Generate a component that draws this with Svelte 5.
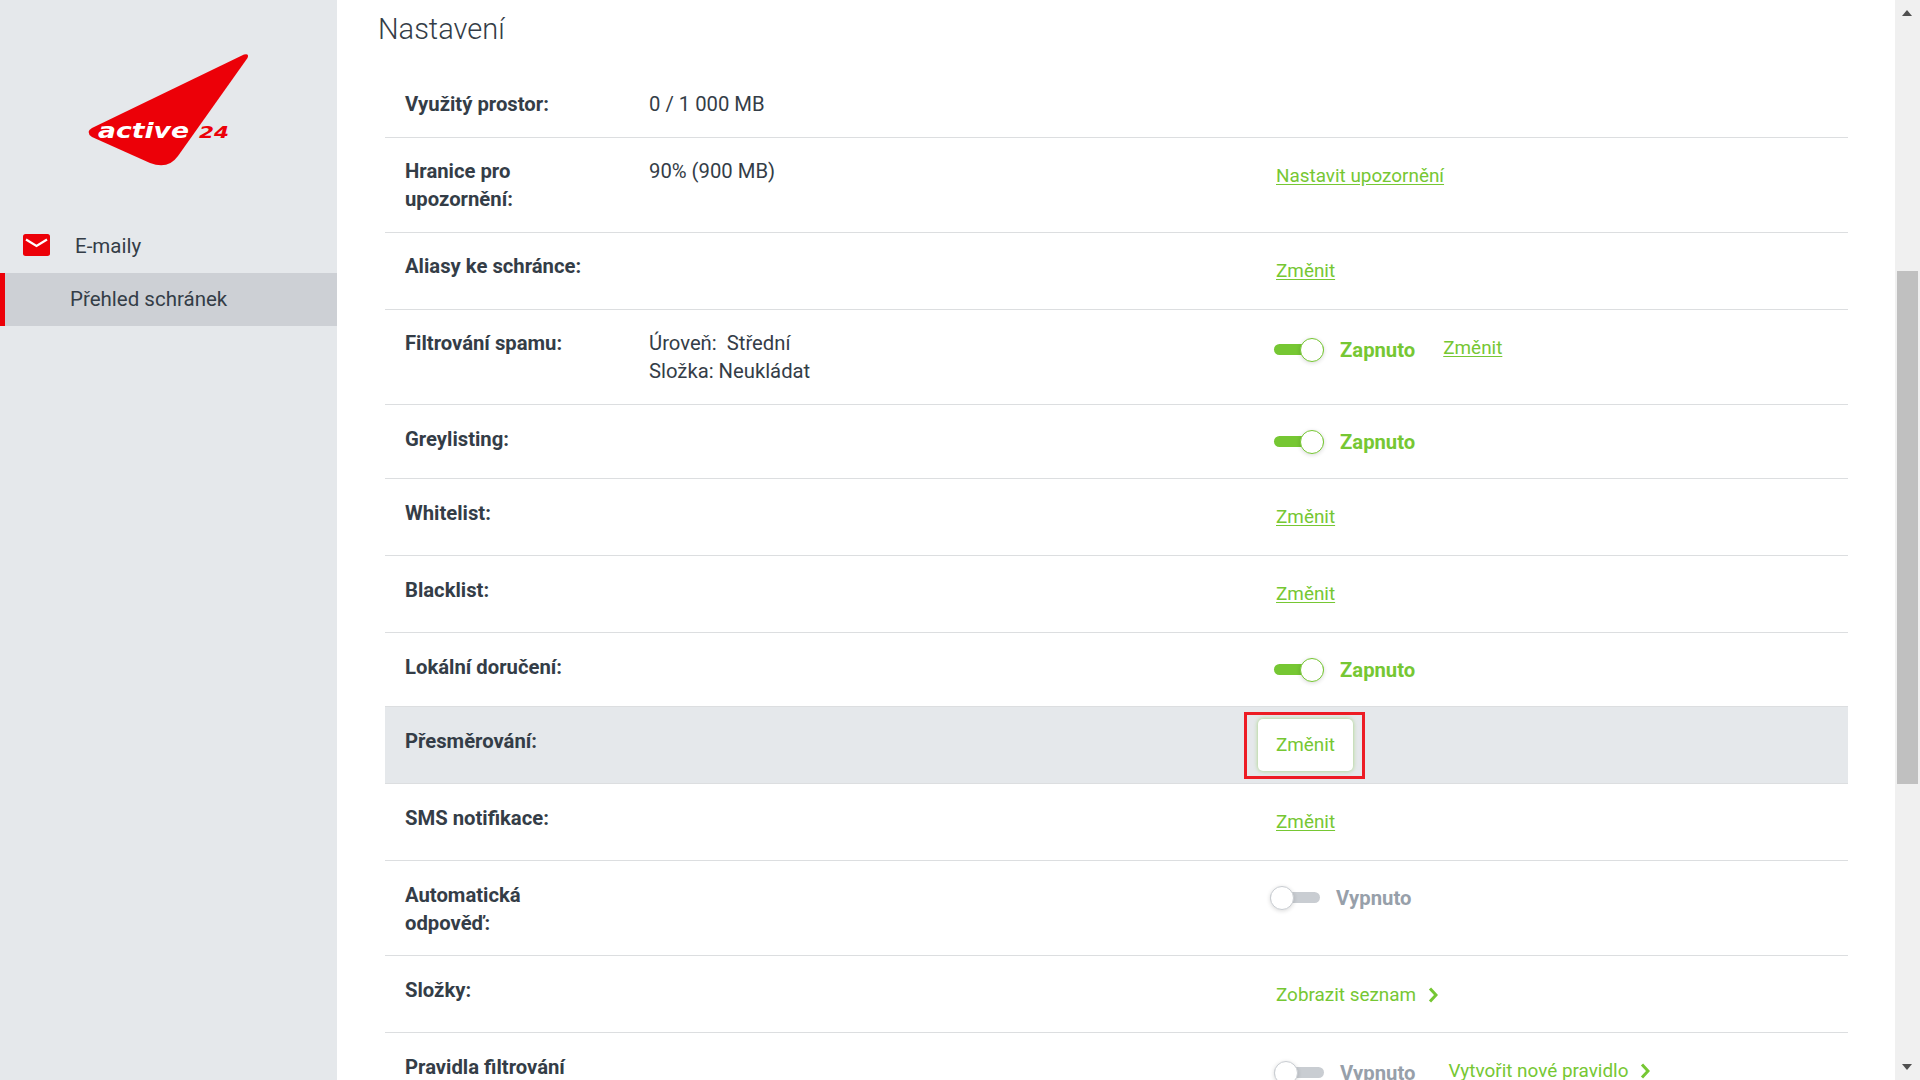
<script>
  const rows = [
    { label: "Využitý prostor:", value: ["0 / 1 000 MB"] },
    { label: "Hranice pro upozornění:", value: ["90% (900 MB)"], link: "Nastavit upozornění" },
    { label: "Aliasy ke schránce:", link: "Změnit" },
    { label: "Filtrování spamu:", value: ["Úroveň:\u00a0 Střední", "Složka: Neukládat"], toggle: true, low: true, link: "Změnit", raised: true },
    { label: "Greylisting:", toggle: true },
    { label: "Whitelist:", link: "Změnit" },
    { label: "Blacklist:", link: "Změnit" },
    { label: "Lokální doručení:", toggle: true },
    { label: "Přesměrování:", button: "Změnit" },
    { label: "SMS notifikace:", link: "Změnit" },
    { label: "Automatická odpověď:", toggle: false, shifted: true },
    { label: "Složky:", go: "Zobrazit seznam" },
    { label: "Pravidla filtrování", toggle: false, low: true, go: "Vytvořit nové pravidlo", raised: true },
  ];
</script>

<div class="page">
  <aside class="sidebar">
    <svg class="logo" viewBox="0 0 337 222" width="337" height="222" role="img" aria-label="active 24">
      <path d="M244 54.5 Q249.500 53 247.500 58 L178 156 Q168 170 150 163 L92 137 Q85 132 92 128 Z" fill="#ec0008" />
      <text class="logo-word" x="98" y="137.500" textLength="91" lengthAdjust="spacingAndGlyphs">active</text>
      <text class="logo-num" x="199" y="138" textLength="30" lengthAdjust="spacingAndGlyphs">24</text>
    </svg>
    <div class="nav-head">
      <svg viewBox="0 0 27 22" width="27" height="22">
        <rect width="27" height="22" rx="2.500" fill="#ec0008" />
        <path d="M3 5.500 L13.500 12 L24 5.500" fill="none" stroke="#fff" stroke-width="2.200" />
      </svg>
      <span>E-maily</span>
    </div>
    <div class="nav-item">Přehled schránek</div>
  </aside>

  <main class="content">
    <h1>Nastavení</h1>
    <div class="list">
      {#each rows as row}
        <div class="row" class:highlight={row.button}>
          <div class="label">{row.label}</div>
          <div class="value">
            {#each row.value ?? [] as line}
              <div>{line}</div>
            {/each}
          </div>
          <div
            class="action"
            class:tall={row.link || row.go || row.button}
            class:low={row.low}
            class:has-toggle={row.toggle !== undefined}
            class:shifted={row.shifted}
          >
            {#if row.toggle !== undefined}
              <span class="toggle" class:on={row.toggle}>
                <span class="track"></span>
                <span class="knob"></span>
              </span>
              <strong class:on={row.toggle}>{row.toggle ? "Zapnuto" : "Vypnuto"}</strong>
            {/if}
            {#if row.link}
              <a href="#top" class:raised={row.raised}>{row.link}</a>
            {/if}
            {#if row.go}
              <a href="#top" class="go" class:raised={row.raised} class:far={row.toggle === false}>
                {row.go}
                <svg viewBox="0 0 10 16" width="10" height="16">
                  <path d="M2 1.500 L8 8 L2 14.500" fill="none" stroke="#76c733" stroke-width="3" />
                </svg>
              </a>
            {/if}
            {#if row.button}
              <button type="button">{row.button}</button>
            {/if}
          </div>
        </div>
      {/each}
    </div>
  </main>

  <div class="scrollbar">
    <span class="arrow up"></span>
    <span class="thumb"></span>
    <span class="arrow down"></span>
  </div>
</div>

<style>
  :global(body) {
    margin: 0;
    background: #fff;
  }

  .page {
    display: flex;
    height: 1080px;
    overflow: hidden;
    font-family: Roboto, "Liberation Sans", sans-serif;
    font-size: 20.25px;
    line-height: 28px;
    color: #343d47;
  }

  .sidebar {
    flex: 0 0 337px;
    font-size: 20.5px;
    background: #e5e8eb;
  }

  .logo {
    display: block;
  }

  .logo-word {
    font-family: "DejaVu Sans", sans-serif;
    font-weight: 700;
    font-style: italic;
    font-size: 22px;
    fill: #fff;
  }

  .logo-num {
    font-family: "DejaVu Sans", sans-serif;
    font-weight: 700;
    font-style: italic;
    font-size: 16px;
    fill: #ec0008;
  }

  .nav-head {
    display: flex;
    align-items: center;
    gap: 25px;
    height: 48px;
    margin-bottom: 3px;
    padding-left: 23px;
  }

  .nav-head svg {
    margin-top: -2px;
  }

  .nav-item {
    height: 53px;
    line-height: 53px;
    padding-left: 65px;
    border-left: 5px solid #ec0008;
    background: #cdd0d5;
  }

  .content {
    flex: 1;
    min-width: 0;
    padding: 0 47px 0 41px;
  }

  h1 {
    margin: 0;
    height: 71px;
    padding-top: 11px;
    box-sizing: border-box;
    font-size: 29px;
    line-height: 36px;
    font-weight: 300;
    color: #343d47;
  }

  .list {
    margin-left: 7px;
  }

  .row {
    display: grid;
    grid-template-columns: 264px 627px 1fr;
    padding: 19px 0 19px;
    border-bottom: 1px solid #dcdee0;
  }

  .row.highlight {
    background: #e5e8eb;
  }

  .label {
    padding: 0 60px 0 20px;
    font-weight: 700;
  }

  .row:nth-child(n + 5) .label {
    padding-top: 1px;
    margin-bottom: -1px;
  }

  .action {
    display: flex;
    align-items: flex-start;
  }

  .action.tall {
    padding: 5px 0 5px;
  }

  .action.has-toggle {
    align-self: start;
    padding: 6px 0 5px;
    margin-left: -2px;
    align-items: center;
  }

  .action.low {
    padding-top: 9px;
  }

  .action.shifted {
    margin-left: -6px;
  }

  .toggle {
    position: relative;
    flex: 0 0 50px;
    height: 24px;
  }

  .track {
    position: absolute;
    left: 0;
    top: 6px;
    width: 50px;
    height: 11px;
    border-radius: 6px;
    background: #c9cdd2;
  }

  .knob {
    position: absolute;
    left: 0;
    top: 0;
    width: 24px;
    height: 24px;
    box-sizing: border-box;
    border-radius: 50%;
    background: #fff;
    border: 1px solid #c9cdd2;
    box-shadow: 0 1px 4px rgba(0, 0, 0, 0.15);
  }

  .toggle.on .track {
    background: #76c733;
  }

  .toggle.on .knob {
    left: 26px;
    border-color: #76c733;
  }

  strong {
    margin-left: 16px;
    font-weight: 700;
    line-height: 24px;
    color: #97a0aa;
  }

  strong.on {
    color: #76c733;
  }

  a {
    color: #76c733;
    font-size: 18.9px;
    text-decoration: underline;
    text-underline-offset: 2px;
  }

  a.raised {
    margin-left: 28px;
    margin-top: -5px;
  }

  a.far {
    margin-left: 33px;
  }

  a.go {
    display: inline-flex;
    align-items: center;
    gap: 12px;
    text-decoration: none;
  }

  a.go:not(.raised) {
    margin-top: 1px;
    margin-bottom: -1px;
  }

  button {
    position: relative;
    width: 95px;
    height: 52px;
    margin: -12px 0 -12px -18px;
    border: 0;
    border-radius: 5px;
    background: #fff;
    color: #76c733;
    font: inherit;
    font-size: 18.9px;
    box-shadow: 0 0 4px rgba(118, 199, 51, 0.6);
  }

  button::after {
    content: "";
    position: absolute;
    top: -7px;
    right: -12px;
    bottom: -8px;
    left: -14px;
    border: 3px solid #ed1c24;
  }

  .scrollbar {
    position: relative;
    flex: 0 0 25px;
    background: #f0f0f0;
  }

  .thumb {
    position: absolute;
    left: 2px;
    top: 271px;
    width: 21px;
    height: 513px;
    background: #c0c0c0;
  }

  .arrow {
    position: absolute;
    left: 7px;
    width: 0;
    height: 0;
    border-left: 5.500px solid transparent;
    border-right: 5.500px solid transparent;
  }

  .arrow.up {
    top: 10px;
    border-bottom: 6px solid #505050;
  }

  .arrow.down {
    bottom: 10px;
    border-top: 6px solid #505050;
  }
</style>
